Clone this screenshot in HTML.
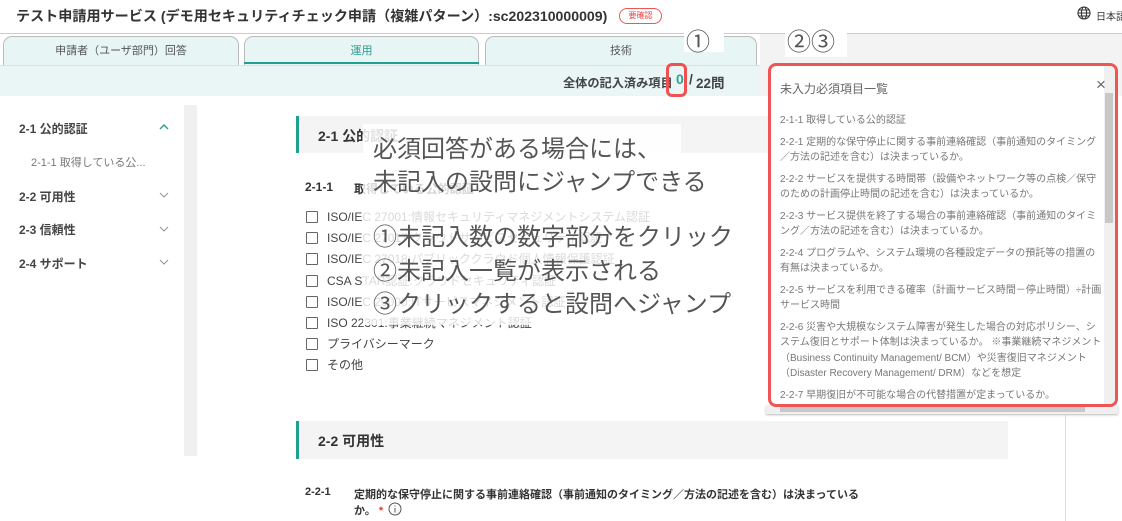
<!DOCTYPE html>
<html><head><meta charset="utf-8"><style>
*{margin:0;padding:0;box-sizing:border-box}
body{width:1122px;height:521px;overflow:hidden;background:#fff;position:relative;font-family:"Liberation Sans","Noto Sans CJK JP",sans-serif;color:#333}
.a{position:absolute;white-space:nowrap}
.tab{position:absolute;top:36px;height:29px;border:1px solid #bbb;border-bottom:none;border-radius:9px 9px 0 0;background:#e8f5f5;font-size:11px;color:#555;text-align:center;line-height:28px}
.cb{position:absolute;left:306px;width:12px;height:12px;border:1.3px solid #666;border-radius:1px;background:#fff}
.lb{position:absolute;left:327px;font-size:12px;color:#444;white-space:nowrap}
.it{font-size:10px;color:#777;line-height:15.5px;margin-bottom:6px;white-space:normal}
.big{position:absolute;left:373px;font-size:24px;color:#555;white-space:nowrap;line-height:30px}
.sb{font-size:12px;font-weight:bold;color:#444}
</style></head><body>
<div class="a" style="left:16px;top:6px;font-size:14.1px;color:#333;font-weight:bold">テスト申請用サービス (デモ用セキュリティチェック申請（複雑パターン）:sc202310000009)</div>
<div class="a" style="left:619px;top:8px;width:43px;height:16px;border:1px solid #e55;border-radius:8px;font-size:8px;color:#e44;text-align:center;line-height:14px">要確認</div>
<svg class="a" style="left:1077px;top:6px" width="14" height="14" viewBox="0 0 14 14" fill="none" stroke="#333" stroke-width="1.1"><circle cx="7" cy="7" r="6"/><ellipse cx="7" cy="7" rx="2.6" ry="6"/><path d="M1 7h12M2 4h10M2 10h10"/></svg>
<div class="a" style="left:1096px;top:8px;font-size:10px;color:#333">日本語</div>
<div class="a" style="left:0;top:33px;width:1122px;height:1px;background:#ccc"></div>
<div class="a" style="left:760px;top:34px;width:362px;height:62px;background:#f3f3f3"></div>
<div class="tab" style="left:3px;width:236px">申請者（ユーザ部門）回答</div>
<div class="tab" style="left:244px;width:235px;color:#2a9d8f">運用</div>
<div class="a" style="left:244px;top:62px;width:235px;height:2px;background:#20a090"></div>
<div class="tab" style="left:485px;width:272px">技術</div>
<div class="a" style="left:0;top:65px;width:760px;height:31px;background:#eaf6f6;border-top:1px solid #dde"></div>
<div class="a" style="left:563px;top:73px;font-size:12.2px;font-weight:bold;color:#444">全体の記入済み項目</div>
<div class="a" style="left:676px;top:71px;font-size:14px;font-weight:bold;color:#2aa198">0</div>
<div class="a" style="left:689px;top:71px;font-size:14px;font-weight:bold;color:#444">/</div>
<div class="a" style="left:696px;top:72px;font-size:13.5px;font-weight:bold;color:#444">22問</div>
<div class="a" style="left:666px;top:63px;width:21px;height:34px;border:3px solid #f05050;border-radius:6px"></div>
<div class="a" style="left:684px;top:22px;width:40px;height:30px;background:#fff;font-size:24px;color:#555;padding-left:2px">①</div>
<div class="a" style="left:785px;top:22px;width:62px;height:35px;background:#fff;font-size:24px;color:#555;padding-left:2px">②③</div>
<!-- sidebar -->
<div class="a sb" style="left:19px;top:120px">2-1 公的認証</div>
<svg class="a" style="left:159px;top:124px" width="10" height="6"><path d="M1 5l4-4 4 4" fill="none" stroke="#2a9d8f" stroke-width="1.4"/></svg>
<div class="a" style="left:31px;top:154px;font-size:11px;color:#777">2-1-1 取得している公...</div>
<div class="a sb" style="left:19px;top:188px">2-2 可用性</div>
<div class="a sb" style="left:19px;top:221px">2-3 信頼性</div>
<div class="a sb" style="left:19px;top:255px">2-4 サポート</div>
<svg class="a" style="left:159px;top:192px" width="10" height="80" fill="none" stroke="#999" stroke-width="1.1"><path d="M1 1l4 4 4-4M1 35l4 4 4-4M1 68l4 4 4-4"/></svg>
<div class="a" style="left:184px;top:105px;width:13px;height:351px;background:#f0f0f0"></div>
<!-- section 2-1 -->
<div class="a" style="left:296px;top:116px;width:712px;height:37px;background:#f4f4f4;border-left:3px solid #20a090"></div>
<div class="a" style="left:318px;top:126px;font-size:14px;font-weight:bold;color:#333">2-1 公的認証</div>
<div class="a" style="left:305px;top:180px;font-size:12px;font-weight:bold;color:#333">2-1-1</div>
<div class="a" style="left:354px;top:180px;font-size:12px;font-weight:bold;color:#333">取得している公的認証</div>
<div class="cb" style="top:211px"></div><div class="lb" style="top:208px">ISO/IEC 27001:情報セキュリティマネジメントシステム認証</div>
<div class="cb" style="top:232px"></div><div class="lb" style="top:229px">ISO/IEC 27017:クラウドサービスセキュリティ認証</div>
<div class="cb" style="top:253px"></div><div class="lb" style="top:250px">ISO/IEC 27018:パブリッククラウド個人情報保護認証</div>
<div class="cb" style="top:275px"></div><div class="lb" style="top:272px">CSA STAR認証:クラウドセキュリティ認証</div>
<div class="cb" style="top:296px"></div><div class="lb" style="top:293px">ISO/IEC 20000:ITサービスマネジメント認証</div>
<div class="cb" style="top:317px"></div><div class="lb" style="top:314px">ISO 22301:事業継続マネジメント認証</div>
<div class="cb" style="top:338px"></div><div class="lb" style="top:335px">プライバシーマーク</div>
<div class="cb" style="top:359px"></div><div class="lb" style="top:356px">その他</div>
<!-- overlay -->
<div class="a" style="left:363px;top:124px;width:318px;height:31px;background:rgba(255,255,255,.85)"></div>
<div class="a" style="left:363px;top:155px;width:390px;height:170px;background:rgba(255,255,255,.8)"></div>
<div class="big" style="top:135px">必須回答がある場合には、</div>
<div class="big" style="top:168px">未記入の設問にジャンプできる</div>
<div class="big" style="top:223px">①未記入数の数字部分をクリック</div>
<div class="big" style="top:257px">②未記入一覧が表示される</div>
<div class="big" style="top:290px">③クリックすると設問へジャンプ</div>
<!-- section 2-2 -->
<div class="a" style="left:1065px;top:415px;width:1px;height:106px;background:#ddd"></div>
<div class="a" style="left:296px;top:421px;width:712px;height:38px;background:#f4f4f4;border-left:3px solid #20a090"></div>
<div class="a" style="left:318px;top:431px;font-size:14px;font-weight:bold;color:#333">2-2 可用性</div>
<div class="a" style="left:305px;top:486px;font-size:11px;font-weight:bold;color:#333">2-2-1</div>
<div class="a" style="left:354px;top:486px;font-size:11px;font-weight:bold;color:#333">定期的な保守停止に関する事前連絡確認（事前通知のタイミング／方法の記述を含む）は決まっている</div>
<div class="a" style="left:354px;top:502px;font-size:11px;font-weight:bold;color:#333">か。 <span style="color:#e33">*</span></div>
<svg class="a" style="left:388px;top:502px" width="14" height="14" fill="none" stroke="#555"><circle cx="7" cy="7" r="6"/><path d="M7 6v4.5M7 3.5v1"/></svg>
<!-- popup -->
<div class="a" style="left:766px;top:405px;width:352px;height:9px;background:#f0f0f0;box-shadow:0 1px 2px #bbb"></div>
<div class="a" style="left:780px;top:406px;width:305px;height:6px;background:#c8c8c8"></div>
<div class="a" style="left:768px;top:63px;width:350px;height:344px;border:3px solid #f05555;border-radius:8px;background:#fff;overflow:hidden;white-space:normal">
<div style="position:absolute;right:0;top:0;width:11px;height:340px;background:#f0f0f0"></div>
<div style="position:absolute;right:2px;top:27px;width:8px;height:130px;background:#c8c8c8"></div>
<div style="position:absolute;left:9px;top:14px;font-size:12px;color:#666">未入力必須項目一覧</div>
<div style="position:absolute;left:325px;top:9px;font-size:17px;color:#666">×</div>
<div style="position:absolute;left:9px;top:47px;width:322px;white-space:normal">
<div class="it">2-1-1 取得している公的認証</div>
<div class="it">2-2-1 定期的な保守停止に関する事前連絡確認（事前通知のタイミング／方法の記述を含む）は決まっているか。</div>
<div class="it">2-2-2 サービスを提供する時間帯（設備やネットワーク等の点検／保守のための計画停止時間の記述を含む）は決まっているか。</div>
<div class="it">2-2-3 サービス提供を終了する場合の事前連絡確認（事前通知のタイミング／方法の記述を含む）は決まっているか。</div>
<div class="it">2-2-4 プログラムや、システム環境の各種設定データの預託等の措置の有無は決まっているか。</div>
<div class="it">2-2-5 サービスを利用できる確率（計画サービス時間－停止時間）÷計画サービス時間</div>
<div class="it">2-2-6 災害や大規模なシステム障害が発生した場合の対応ポリシー、システム復旧とサポート体制は決まっているか。 ※事業継続マネジメント（Business Continuity Management/ BCM）や災害復旧マネジメント（Disaster Recovery Management/ DRM）などを想定</div>
<div class="it">2-2-7 早期復旧が不可能な場合の代替措置が定まっているか。</div>
</div></div>
</body></html>
